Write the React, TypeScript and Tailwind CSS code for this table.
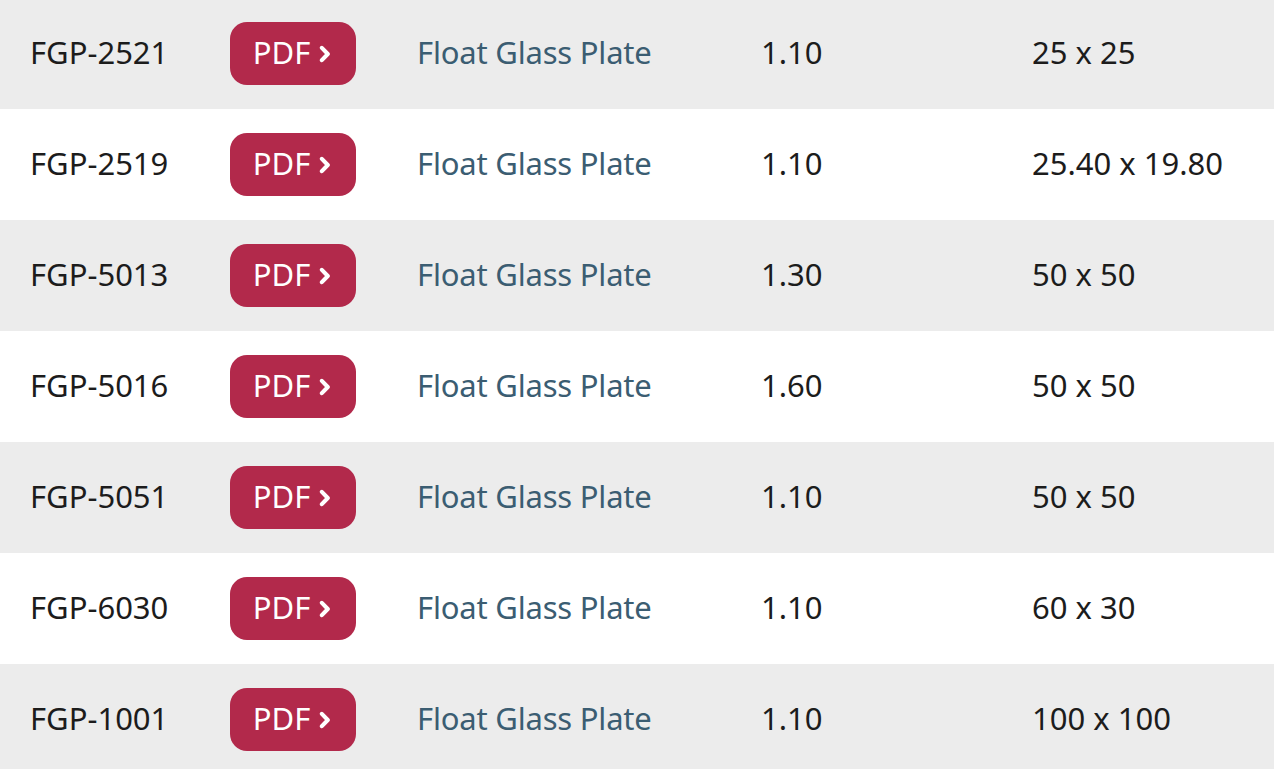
const rows = [
  { code: 'FGP-2521', thick: '1.10', size: '25 x 25' },
  { code: 'FGP-2519', thick: '1.10', size: '25.40 x 19.80' },
  { code: 'FGP-5013', thick: '1.30', size: '50 x 50' },
  { code: 'FGP-5016', thick: '1.60', size: '50 x 50' },
  { code: 'FGP-5051', thick: '1.10', size: '50 x 50' },
  { code: 'FGP-6030', thick: '1.10', size: '60 x 30' },
  { code: 'FGP-1001', thick: '1.10', size: '100 x 100' },
];

function Chevron() {
  return (
    <svg viewBox="0 0 10 16" className="w-[12px] h-[18px]" fill="none">
      <path d="M2.2 2.5 L7.5 8 L2.2 13.5" stroke="white" strokeWidth="3.6" strokeLinecap="round" strokeLinejoin="round" />
    </svg>
  );
}

export default function App() {
  return (
    <div className="w-[1274px] h-[769px] overflow-hidden bg-white font-['Noto_Sans',sans-serif] text-[31px] text-[#1c1c1c]">
      <div className="-mt-[2px]">
        {rows.map((r, i) => (
          <div
            key={r.code}
            className={`flex items-center h-[111px] ${i % 2 === 0 ? 'bg-[#ececec]' : 'bg-white'}`}
          >
            <div className="w-[230px] pl-[30px] -mt-[3px]">{r.code}</div>
            <div className="w-[187px]">
              <a className="flex items-center justify-center gap-[9px] w-[126px] h-[63px] rounded-[17px] bg-[#b2294b] text-white">
                <span className="-mt-[3px] -ml-[2px]">PDF</span>
                <Chevron />
              </a>
            </div>
            <div className="w-[344px] -mt-[3px] tracking-[-0.2px] text-[#3b5d72]">Float Glass Plate</div>
            <div className="w-[271px] -mt-[3px]">{r.thick}</div>
            <div className="flex-1 -mt-[3px]">{r.size}</div>
          </div>
        ))}
      </div>
    </div>
  );
}
